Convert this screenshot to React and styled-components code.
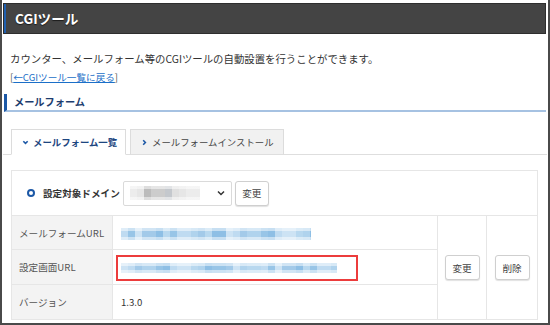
import React from 'react';
import styled, { createGlobalStyle } from 'styled-components';

const GlobalStyle = createGlobalStyle`
  html, body { margin: 0; padding: 0; background: #fff; }
  body {
    font-family: "Noto Sans CJK JP", "Liberation Sans", sans-serif;
    font-size: 9.6px;
    color: #333;
  }
  * { box-sizing: border-box; }
`;

// pixelated "blurred" strip, like a redacted URL
const mosaic = (colors, width, seed) => {
  const n = Math.ceil(width / 7);
  const stops = [];
  for (let i = 0; i < n; i++) {
    const c = colors[(i * 3 + seed + ((i * i) % 5)) % colors.length];
    stops.push(`${c} ${i * 7}px ${(i + 1) * 7}px`);
  }
  return `linear-gradient(180deg, rgba(255,255,255,.5) 0 3px, transparent 3px calc(100% - 3px), rgba(255,255,255,.5) calc(100% - 3px)), linear-gradient(90deg, ${stops.join(',')})`;
};

const BLUES = ['#a3cae9', '#bfdbf1', '#8ebfe5', '#b0d3ed', '#cde3f4', '#98c5e7', '#b8d8ef'];
const GRAYS = ['#e0e0e0', '#cccccc', '#ececec', '#c4c8cd', '#d6d6d6', '#bcbcbc', '#e6e6e6'];

const Frame = styled.div`
  width: 550px;
  height: 325px;
  padding-top: 3px;
  border: 2px solid #4a4a4a;
  border-top: none;
  overflow: hidden;
`;

const PageHeader = styled.h1`
  margin: 0 2px 0 1px;
  height: 31px;
  background: #444;
  border: 1px solid #2e2e2e;
  box-shadow: inset 2px 0 0 #1f5fae;
  color: #fff;
  font-size: 13.6px;
  font-weight: bold;
  line-height: 29px;
  padding-left: 11px;
  text-shadow: 0 1px 1px rgba(0, 0, 0, .6);
`;

const Intro = styled.div`
  margin-top: 15px;
  padding-left: 8px;
  line-height: 19px;
  color: #333;
`;

const Lead = styled.div`
  font-size: 10.4px;
`;

const Bracket = styled.span`
  color: #555;
`;

const BackLink = styled.a`
  color: #1b6fc8;
  text-decoration: underline;
`;

const SectionTitle = styled.h2`
  margin: 7px 2px 0 2px;
  height: 18px;
  border-left: 3px solid #1c58a6;
  border-bottom: 2px solid #a6c2e2;
  padding-left: 7px;
  font-size: 10.2px;
  font-weight: bold;
  line-height: 16px;
  color: #1d3d6e;
`;

const TabList = styled.div`
  display: flex;
  gap: 4px;
  margin: 17px 1px 0 1px;
  padding-left: 8px;
  border-bottom: 1px solid #dedede;
`;

const Tab = styled.div`
  display: flex;
  align-items: center;
  gap: 4px;
  flex: none;
  white-space: nowrap;
  height: 26px;
  margin-bottom: -1px;
  padding: 0 ${p => (p.$active ? 8 : 9)}px 0 10px;
  border: 1px solid #dcdcdc;
  border-bottom: ${p => (p.$active ? '1px solid #fff' : '1px solid #dedede')};
  background: ${p => (p.$active ? '#fff' : '#f1f1f1')};
  color: ${p => (p.$active ? '#1d4680' : '#444')};
  font-size: 9.4px;
  font-weight: ${p => (p.$active ? 'bold' : 'normal')};
`;

const Panel = styled.div`
  width: 527px;
  margin: 15px 0 0 9px;
`;

const DomainBar = styled.div`
  display: flex;
  align-items: center;
  height: 45px;
  padding: 0 0 0 15px;
  border: 1px solid #e6e6e6;
  border-bottom: none;
`;

const Ring = styled.span`
  width: 8px;
  height: 8px;
  border-radius: 50%;
  border: 2px solid #1c58a6;
  margin-right: 8px;
`;

const DomainLabel = styled.span`
  font-weight: bold;
  color: #333;
  margin-right: 3px;
`;

const Select = styled.div`
  display: flex;
  align-items: center;
  justify-content: space-between;
  width: 109px;
  height: 25px;
  padding: 0 6px 0 6px;
  border: 1px solid #dadada;
  border-radius: 2px;
  background: #fff;
  margin-right: 3px;
`;

const Blur = styled.span`
  display: inline-block;
  width: ${p => p.$w}px;
  height: ${p => p.$h}px;
  filter: blur(0.4px);
  vertical-align: middle;
`;

const Button = styled.button`
  font-family: inherit;
  font-size: 9.6px;
  color: #444;
  background: #fff;
  width: ${p => p.$w || 35}px;
  height: 25px;
  padding: 0;
  border: 1px solid #cfcfcf;
  border-radius: 3px;
  box-shadow: 0 1px 1px rgba(0, 0, 0, .12);
`;

const Table = styled.table`
  width: 527px;
  border-collapse: collapse;
  table-layout: fixed;
`;

const Label = styled.td`
  width: 101px;
  height: ${p => p.$h}px;
  background: #f3f3f3;
  border: 1px solid #e6e6e6;
  padding-left: 7px;
  color: #555;
`;

const Value = styled.td`
  border: 1px solid #e6e6e6;
  padding-left: 8px;
  color: #333;
`;

const ActionCell = styled.td`
  width: ${p => p.$w}px;
  border: 1px solid #e6e6e6;
  text-align: center;
  vertical-align: middle;
`;

const RedFrame = styled.span`
  display: inline-block;
  margin: 1px 0 0 -5px;
  padding: 6px 19px 6px 3px;
  border: 2px solid #ec3c3c;
  line-height: 0;
`;

const Chevron = ({ down }) => (
  <svg width="7" height="7" viewBox="0 0 8 8">
    <path
      d={down ? 'M1.5 2.5 L4 5 L6.5 2.5' : 'M2.5 1.5 L5 4 L2.5 6.5'}
      fill="none"
      stroke="#1c58a6"
      strokeWidth="1.8"
    />
  </svg>
);

const SelectArrow = () => (
  <svg width="8" height="6" viewBox="0 0 8 6">
    <path d="M1 1.5 L4 4.5 L7 1.5" fill="none" stroke="#333" strokeWidth="1.5" />
  </svg>
);

export default function App() {
  return (
    <>
      <GlobalStyle />
      <Frame>
        <PageHeader>CGIツール</PageHeader>
        <Intro>
          <Lead>カウンター、メールフォーム等のCGIツールの自動設置を行うことができます。</Lead>
          <Bracket>[</Bracket>
          <BackLink href="#">←CGIツール一覧に戻る</BackLink>
          <Bracket>]</Bracket>
        </Intro>
        <SectionTitle>メールフォーム</SectionTitle>
        <TabList>
          <Tab $active>
            <Chevron down />
            メールフォーム一覧
          </Tab>
          <Tab>
            <Chevron />
            メールフォームインストール
          </Tab>
        </TabList>
        <Panel>
          <DomainBar>
            <Ring />
            <DomainLabel>設定対象ドメイン</DomainLabel>
            <Select>
              <Blur $w={70} $h={14} style={{ background: mosaic(GRAYS, 70, 2) }} />
              <SelectArrow />
            </Select>
            <Button $w={34}>変更</Button>
          </DomainBar>
          <Table>
            <tbody>
              <tr>
                <Label $h={34}>メールフォームURL</Label>
                <Value>
                  <Blur $w={190} $h={12} style={{ background: mosaic(BLUES, 190, 1) }} />
                </Value>
                <ActionCell $w={49} rowSpan={3}>
                  <Button>変更</Button>
                </ActionCell>
                <ActionCell $w={51} rowSpan={3}>
                  <Button>削除</Button>
                </ActionCell>
              </tr>
              <tr>
                <Label $h={35}>設定画面URL</Label>
                <Value>
                  <RedFrame>
                    <Blur $w={216} $h={10} style={{ background: mosaic(BLUES, 216, 4) }} />
                  </RedFrame>
                </Value>
              </tr>
              <tr>
                <Label $h={35}>バージョン</Label>
                <Value>1.3.0</Value>
              </tr>
            </tbody>
          </Table>
        </Panel>
      </Frame>
    </>
  );
}
